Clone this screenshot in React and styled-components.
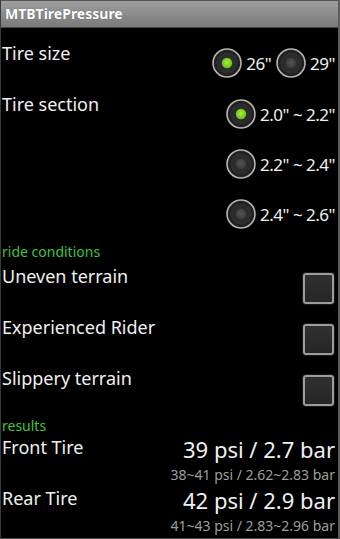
import React from "react";
import styled, { createGlobalStyle } from "styled-components";

const GlobalStyle = createGlobalStyle`
  html, body {
    margin: 0;
    padding: 0;
    background: #000;
  }
  body {
    font-family: "Noto Sans", "Open Sans", sans-serif;
  }
`;

const Screen = styled.div`
  width: 340px;
  height: 539px;
  box-sizing: border-box;
  background: #000;
  color: #f0f0f0;
  border-left: 1px solid #3a3a3a;
  border-right: 2px solid #5c5c5c;
  border-bottom: 1px solid #4a4a4a;
  overflow: hidden;
`;

const TitleBar = styled.div`
  height: 26px;
  line-height: 26px;
  padding-left: 4px;
  background: linear-gradient(#9e9e9e, #7a7a7a);
  border-top: 1px solid #555;
  border-bottom: 1px solid #444;
  font-size: 14px;
  font-weight: bold;
  color: #fff;
  text-shadow: 0 0 1px rgba(0, 0, 0, 0.4);
`;

const Content = styled.div`
  padding: 0 3px 0 1px;
`;

const Row = styled.div`
  display: flex;
  justify-content: space-between;
  align-items: flex-start;
  height: ${(p) => p.h}px;
`;

const Label = styled.div`
  font-size: 18px;
  line-height: 24px;
  margin-top: ${(p) => p.top || 0}px;
`;

const RadioGroup = styled.div`
  display: flex;
  flex-direction: ${(p) => (p.vertical ? "column" : "row")};
  gap: ${(p) => (p.vertical ? 0 : 5)}px;
  margin-top: ${(p) => p.top || 0}px;
`;

const RadioItem = styled.label`
  display: flex;
  align-items: center;
  gap: 4px;
  height: 50px;
  font-size: 17px;
  letter-spacing: -0.5px;
`;

const SectionHeader = styled.div`
  font-size: 14px;
  line-height: 18px;
  color: #3ec63e;
  margin-top: ${(p) => p.top || 0}px;
`;

const CheckRow = styled.div`
  display: flex;
  justify-content: space-between;
  align-items: flex-start;
  height: 51px;
`;

const CheckBox = styled.span`
  display: block;
  width: 31px;
  height: 31px;
  box-sizing: border-box;
  margin-top: 12px;
  margin-right: 1px;
  border: 2px solid #9c9c9c;
  border-radius: 3px;
  background: linear-gradient(#303030, #262626);
  box-shadow: 0 0 0 1px #1a1a1a;
`;

const ResultRow = styled.div`
  display: flex;
  justify-content: space-between;
  align-items: flex-start;
  margin-bottom: 2px;
`;

const ResultValues = styled.div`
  display: flex;
  flex-direction: column;
  align-items: flex-end;
`;

const BigValue = styled.div`
  font-size: 22px;
  line-height: 28px;
  margin-bottom: 3px;
`;

const Range = styled.div`
  font-size: 14px;
  line-height: 18px;
  color: #9e9e9e;
`;

const RadioIcon = ({ checked }) => (
  <svg width="30" height="30" viewBox="0 0 30 30">
    <defs>
      <radialGradient id={checked ? "dotOn" : "dotOff"} cx="50%" cy="45%" r="50%">
        <stop offset="0%" stopColor={checked ? "#a6f03a" : "#555"} />
        <stop offset="100%" stopColor={checked ? "#6cc21c" : "#3c3c3c"} />
      </radialGradient>
    </defs>
    <circle cx="15" cy="15" r="14" fill="#262626" stroke="#b4b4b4" strokeWidth="1.6" />
    <circle cx="15" cy="15" r="11.5" fill="#2c2c2c" stroke="#1a1a1a" strokeWidth="1" />
    <circle cx="15" cy="15" r="5.2" fill={`url(#${checked ? "dotOn" : "dotOff"})`} />
  </svg>
);

const Radio = ({ checked, children }) => (
  <RadioItem>
    <RadioIcon checked={checked} />
    {children}
  </RadioItem>
);

const conditions = ["Uneven terrain", "Experienced Rider", "Slippery terrain"];

const results = [
  { name: "Front Tire", value: "39 psi / 2.7 bar", range: "38~41 psi / 2.62~2.83 bar" },
  { name: "Rear Tire", value: "42 psi / 2.9 bar", range: "41~43 psi / 2.83~2.96 bar" },
];

export default function App() {
  return (
    <Screen>
      <GlobalStyle />
      <TitleBar>MTBTirePressure</TitleBar>
      <Content>
        <Row h={60}>
          <Label top={13}>Tire size</Label>
          <RadioGroup top={10}>
            <Radio checked>26"</Radio>
            <Radio>29"</Radio>
          </RadioGroup>
        </Row>
        <Row h={151}>
          <Label top={4}>Tire section</Label>
          <RadioGroup vertical top={1}>
            <Radio checked>2.0" ~ 2.2"</Radio>
            <Radio>2.2" ~ 2.4"</Radio>
            <Radio>2.4" ~ 2.6"</Radio>
          </RadioGroup>
        </Row>
        <SectionHeader top={4}>ride conditions</SectionHeader>
        {conditions.map((c) => (
          <CheckRow key={c}>
            <Label top={3}>{c}</Label>
            <CheckBox />
          </CheckRow>
        ))}
        <SectionHeader top={3}>results</SectionHeader>
        {results.map((r) => (
          <ResultRow key={r.name}>
            <Label>{r.name}</Label>
            <ResultValues>
              <BigValue>{r.value}</BigValue>
              <Range>{r.range}</Range>
            </ResultValues>
          </ResultRow>
        ))}
      </Content>
    </Screen>
  );
}
